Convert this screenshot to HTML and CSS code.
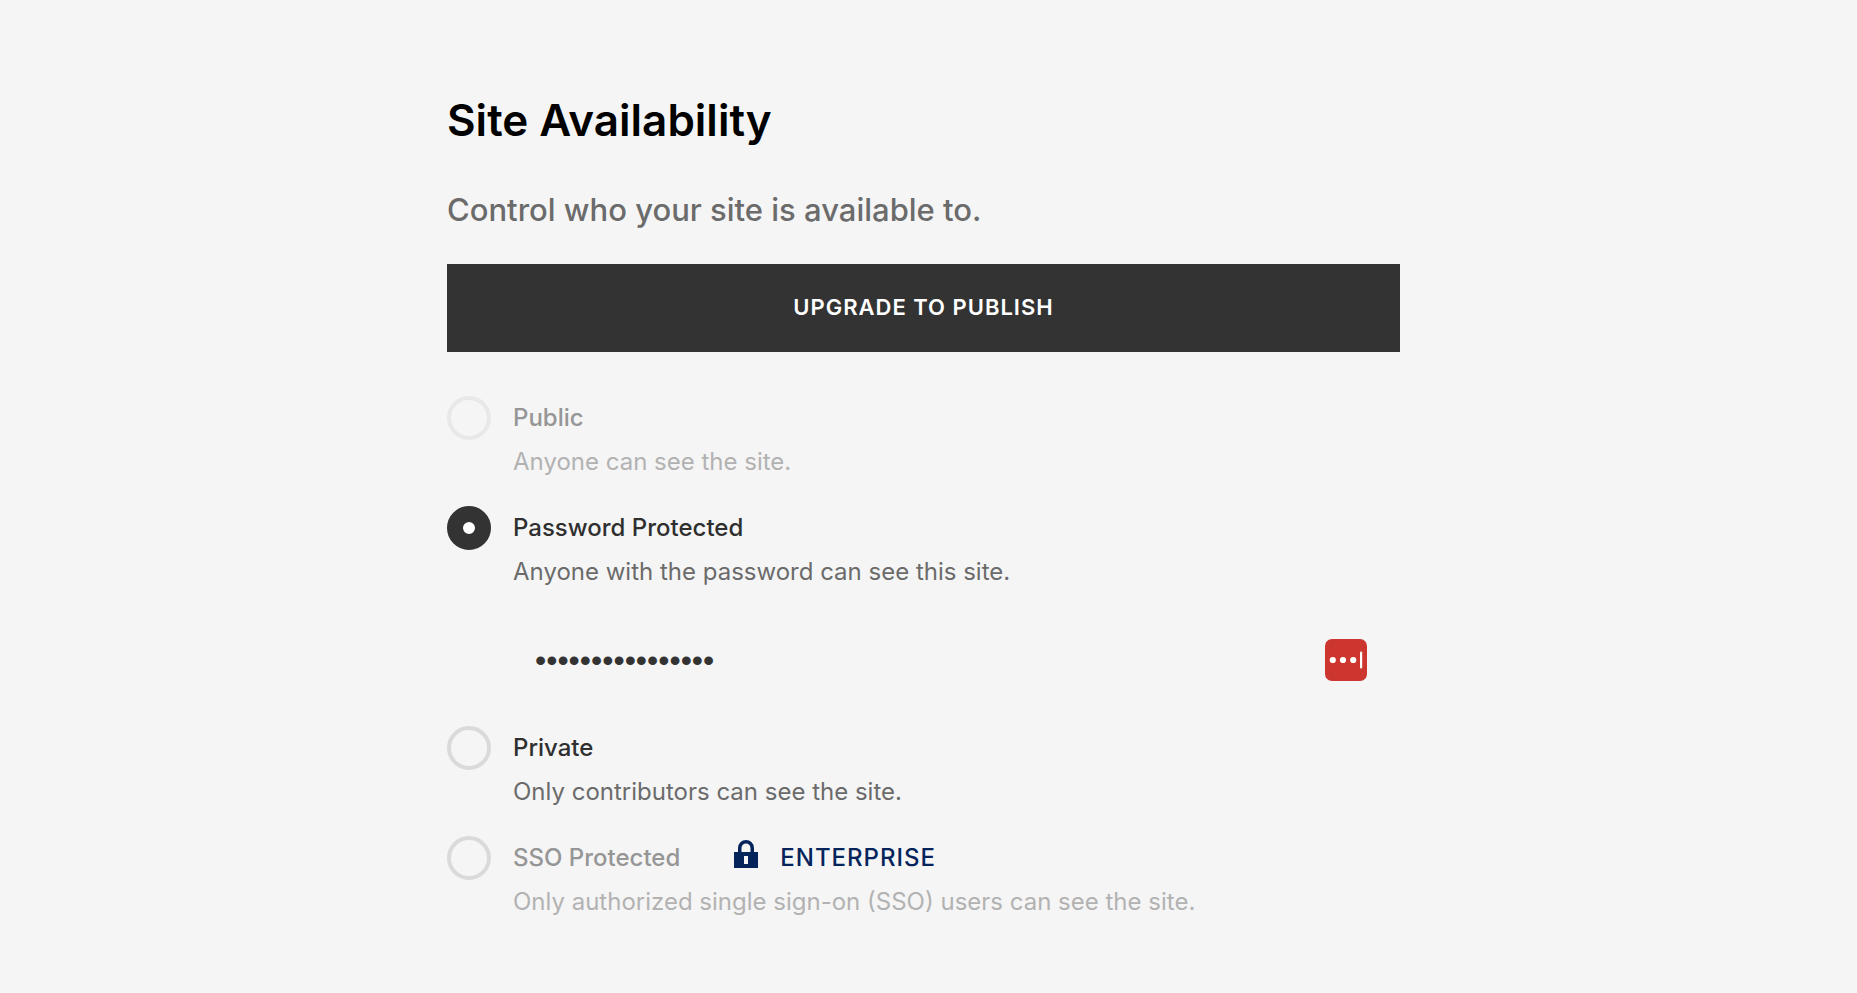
FILE: index.html
```html
<!DOCTYPE html>
<html lang="en">
<head>
<meta charset="utf-8">
<meta name="viewport" content="width=device-width, initial-scale=1">
<title>Site Availability</title>
<link rel="stylesheet" href="styles.css">
</head>
<body>
<main class="panel">
  <h1 class="title">Site Availability</h1>
  <p class="subtitle">Control who your site is available to.</p>
  <button class="upgrade" type="button">UPGRADE TO PUBLISH</button>
  <form class="options">
    <div class="option option-muted">
      <input class="radio" type="radio" name="availability" id="public" aria-describedby="public-note" disabled>
      <label class="label" for="public">Public</label>
      <p class="note" id="public-note">Anyone can see the site.</p>
    </div>
    <div class="option">
      <input class="radio" type="radio" name="availability" id="protected" aria-describedby="protected-note" checked>
      <label class="label" for="protected">Password Protected</label>
      <p class="note" id="protected-note">Anyone with the password can see this site.</p>
    </div>
    <div class="field">
      <input class="password" type="password" aria-label="Site password" value="sitepassword1234">
      <button class="manager" type="button" aria-label="Open password manager">
        <svg class="manager-icon" viewBox="0 0 42 42" aria-hidden="true">
          <rect width="42" height="42" rx="7" fill="#cd362f"/>
          <circle cx="7.8" cy="21" r="3.1" fill="#fff"/>
          <circle cx="18" cy="21" r="3.1" fill="#fff"/>
          <circle cx="28.2" cy="21" r="3.1" fill="#fff"/>
          <rect x="35" y="12.6" width="2.2" height="16.8" rx="1" fill="#fff"/>
        </svg>
      </button>
    </div>
    <div class="option">
      <input class="radio" type="radio" name="availability" id="private" aria-describedby="private-note">
      <label class="label" for="private">Private</label>
      <p class="note" id="private-note">Only contributors can see the site.</p>
    </div>
    <div class="option option-locked">
      <input class="radio" type="radio" name="availability" id="sso" aria-describedby="sso-note" disabled>
      <div class="label-row">
        <label class="label" for="sso">SSO Protected</label>
        <span class="badge">
          <svg class="lock" viewBox="0 0 24 28" aria-hidden="true">
            <path fill="#06245c" fill-rule="evenodd" d="M0 12h4V8a8 8 0 0 1 16 0v4h4v16H0zM7.5 12h9V8a4.5 4.5 0 0 0-9 0zM10 16v8h4v-8z"/>
          </svg>
          <span>ENTERPRISE</span>
        </span>
      </div>
      <p class="note" id="sso-note">Only authorized single sign-on (SSO) users can see the site.</p>
    </div>
  </form>
</main>
</body>
</html>
```
FILE: styles.css
```css
* {
  box-sizing: border-box;
}

body {
  margin: 0;
  padding: 88px 32px 66px 22px;
  background: #f5f5f5;
  color: #2f2f2f;
  font-family: Inter, "Liberation Sans", sans-serif;
  font-size: 24px;
  line-height: 44px;
}

.panel {
  max-width: 953px;
  margin: 0 auto;
}

.title {
  margin: 0;
  color: #000;
  font-size: 44px;
  font-weight: 600;
  line-height: 64px;
}

.subtitle {
  margin: 36px 0 32px;
  color: #6b6b6b;
  font-size: 31px;
  font-weight: 500;
}

.upgrade {
  display: block;
  width: 100%;
  height: 88px;
  padding: 0 0 2px;
  border: 0;
  background: #333;
  color: #fff;
  font: inherit;
  font-size: 22px;
  font-weight: 600;
  letter-spacing: 1px;
}

.options {
  display: flex;
  flex-direction: column;
  gap: 22px;
  margin-top: 44px;
}

.option {
  display: grid;
  grid-template-columns: 44px 1fr;
  column-gap: 22px;
}

.radio {
  appearance: none;
  width: 44px;
  height: 44px;
  margin: 0;
  border: 4px solid #dadada;
  border-radius: 50%;
}

.radio:checked {
  border: 16px solid #333;
  background: #fff;
}

.option-muted .radio {
  border-color: #e8e8e8;
}

.label {
  font-weight: 500;
}

.note {
  grid-column: 2;
  margin: 0;
  color: #6b6b6b;
}

.option-muted .label,
.option-locked .label {
  color: #969696;
}

.option-muted .note,
.option-locked .note {
  color: #b2b2b2;
}

.label-row {
  display: flex;
  gap: 54px;
}

.badge {
  display: flex;
  gap: 22px;
  color: #06245c;
  font-weight: 500;
  letter-spacing: 1px;
}

.lock {
  width: 24px;
  height: 28px;
  margin-top: 4px;
}

.field {
  display: flex;
  align-items: center;
  height: 88px;
  padding: 0 33px 0 88px;
}

.password {
  flex: 1;
  min-width: 0;
  padding: 0;
  border: 0;
  outline: 0;
  background: transparent;
  color: #333;
  font-family: "Liberation Sans", sans-serif;
  font-size: 32px;
}

.manager {
  width: 42px;
  height: 42px;
  padding: 0;
  border: 0;
  background: none;
}

.manager-icon {
  display: block;
}
```
